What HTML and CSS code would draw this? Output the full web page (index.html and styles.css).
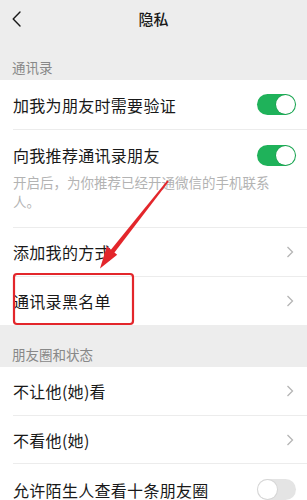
FILE: index.html
```html
<!DOCTYPE html>
<html lang="zh-CN">
<head>
<meta charset="utf-8">
<title>隐私</title>
<link rel="stylesheet" href="styles.css">
</head>
<body>
<div class="page">
  <header class="nav">
    <span class="back">
      <svg width="9" height="16" viewBox="0 0 9 16"><path d="M8 1 L1.2 8 L8 15" fill="none" stroke="#1a1a1a" stroke-width="1.4" stroke-linecap="round" stroke-linejoin="round"/></svg>
    </span>
    <h1 class="title">隐私</h1>
  </header>

  <div class="group-label">通讯录</div>
  <section class="group">
    <div class="row">
      <span class="label">加我为朋友时需要验证</span>
      <span class="switch on"></span>
    </div>
    <div class="row row-desc">
      <div class="row-main">
        <span class="label">向我推荐通讯录朋友</span>
        <span class="switch on"></span>
      </div>
      <p class="desc">开启后，为你推荐已经开通微信的手机联系人。</p>
    </div>
    <div class="row">
      <span class="label">添加我的方式</span>
      <svg class="chev" width="8" height="12" viewBox="0 0 8 12"><path d="M1.5 1 L6.5 6 L1.5 11" fill="none" stroke="#b5b5b5" stroke-width="1.3"/></svg>
    </div>
    <div class="row">
      <span class="label">通讯录黑名单</span>
      <svg class="chev" width="8" height="12" viewBox="0 0 8 12"><path d="M1.5 1 L6.5 6 L1.5 11" fill="none" stroke="#b5b5b5" stroke-width="1.3"/></svg>
    </div>
  </section>

  <div class="group-label">朋友圈和状态</div>
  <section class="group group-compact">
    <div class="row">
      <span class="label">不让他(她)看</span>
      <svg class="chev" width="8" height="12" viewBox="0 0 8 12"><path d="M1.5 1 L6.5 6 L1.5 11" fill="none" stroke="#b5b5b5" stroke-width="1.3"/></svg>
    </div>
    <div class="row">
      <span class="label">不看他(她)</span>
      <svg class="chev" width="8" height="12" viewBox="0 0 8 12"><path d="M1.5 1 L6.5 6 L1.5 11" fill="none" stroke="#b5b5b5" stroke-width="1.3"/></svg>
    </div>
    <div class="row row-tall">
      <span class="label">允许陌生人查看十条朋友圈</span>
      <span class="switch off"></span>
    </div>
  </section>

  <svg class="annot" width="307" height="500" viewBox="0 0 307 500">
    <rect x="14" y="274" width="119" height="50" rx="3" fill="none" stroke="#e3262b" stroke-width="2.2"/>
    <polygon points="168.8,181.6 167.2,180.4 110.3,250.6 113.7,253.4" fill="#e3262b"/>
    <polygon points="100,268.5 106.8,246.3 117.2,254.7" fill="#e3262b"/>
  </svg>
</div>
</body>
</html>
```

FILE: styles.css
```css
* { box-sizing: border-box; }
html, body { margin: 0; padding: 0; }
body {
  background: #ededed;
  font-family: "Noto Sans CJK SC", "Noto Sans", sans-serif;
  color: #191919;
}
.page {
  position: relative;
  width: 307px;
  height: 500px;
  overflow: hidden;
  background: #ededed;
}
.nav {
  height: 38px;
  display: flex;
  align-items: center;
  justify-content: center;
  position: relative;
}
.back {
  position: absolute;
  left: 12px;
  top: 11px;
  display: flex;
}
.title {
  margin: 0;
  font-size: 15px;
  font-weight: 500;
  line-height: 20px;
  color: #1a1a1a;
}
.group-label {
  padding: 20px 12px 4px;
  font-size: 13.5px;
  line-height: 18px;
  color: #888;
}
.group {
  background: #fff;
}
.row {
  margin-left: 13px;
  padding-right: 11px;
  height: 49px;
  display: flex;
  align-items: center;
  justify-content: space-between;
}
.row + .row { border-top: 1px solid #ececec; }
.group-compact .row { height: 48px; }
.group-compact .row-tall { height: 52px; }
.label {
  font-size: 16px;
  line-height: 22px;
  letter-spacing: 0.3px;
}
.chev { margin-right: 2px; }
.row-desc {
  height: 98px;
  display: block;
  padding-top: 14px;
}
.row-main {
  display: flex;
  align-items: center;
  justify-content: space-between;
  height: 22px;
}
.desc {
  margin: 7px 0 0;
  max-width: 262px;
  font-size: 13.5px;
  line-height: 19px;
  color: #b3b3b3;
}
.switch {
  position: relative;
  width: 39px;
  height: 21px;
  border-radius: 11px;
  flex: none;
}
.switch::after {
  content: "";
  position: absolute;
  top: 1px;
  width: 19px;
  height: 19px;
  border-radius: 50%;
  background: #fff;
}
.switch.on { background: #1fb25a; }
.switch.on::after { right: 1px; box-shadow: 0 0 0 0.5px #17964a; }
.switch.off { background: #e4e4e4; }
.switch.off::after { left: 1px; box-shadow: 0 0 0 1px #d6d6d6; }
.annot {
  position: absolute;
  left: 0;
  top: 0;
  pointer-events: none;
}
```
